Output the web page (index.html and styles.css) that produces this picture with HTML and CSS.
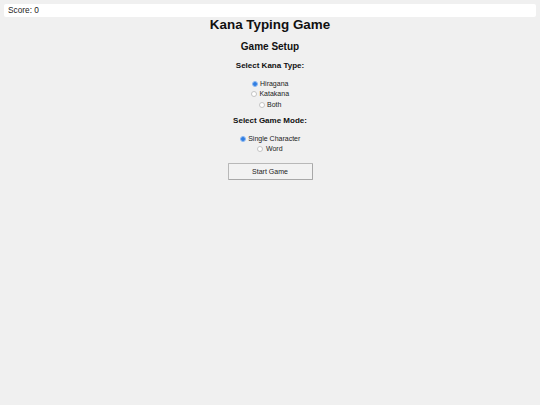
FILE: index.html
```html
<!DOCTYPE html>
<html lang="en">
<head>
<meta charset="utf-8">
<title>Kana Typing Game</title>
<link rel="stylesheet" href="styles.css">
</head>
<body>
<div class="score">Score: 0</div>
<h1 class="title">Kana Typing Game</h1>
<div class="setup">
  <h2 class="setup-title">Game Setup</h2>
  <h3 class="group-title">Select Kana Type:</h3>
  <div class="options">
    <label class="option"><input type="radio" name="kana" checked> Hiragana</label>
    <label class="option"><input type="radio" name="kana"> Katakana</label>
    <label class="option"><input type="radio" name="kana"> Both</label>
  </div>
  <h3 class="group-title">Select Game Mode:</h3>
  <div class="options">
    <label class="option"><input type="radio" name="mode" checked> Single Character</label>
    <label class="option"><input type="radio" name="mode"> Word</label>
  </div>
  <button class="start">Start Game</button>
</div>
</body>
</html>
```
FILE: styles.css
```css
html, body {
  background: #f0f0f0;
}
body {
  margin: 4px;
  font-family: "Liberation Sans", Arial, sans-serif;
  color: #111;
}
.score {
  background: #fff;
  height: 13px;
  line-height: 13px;
  padding: 0 4px;
  font-size: 8.3px;
  border-radius: 2px;
  color: #222;
}
.title {
  margin: 0;
  font-size: 13.4px;
  line-height: 15px;
  text-align: center;
}
.setup {
  text-align: center;
  display: flex;
  flex-direction: column;
  align-items: center;
}
.setup-title {
  margin: 9px 0 0;
  font-size: 10px;
  line-height: 12px;
}
.group-title {
  margin: 7.5px 0 0;
  font-size: 8px;
  line-height: 10px;
}
.group-title + .options {
  margin-top: 8px;
}
.options + .group-title {
  margin-top: 5.5px;
}
.options {
  display: flex;
  flex-direction: column;
  align-items: center;
}
.option {
  font-size: 7px;
  line-height: 10.5px;
  display: flex;
  align-items: center;
  gap: 1px;
  color: #222;
}
.option input {
  appearance: none;
  -webkit-appearance: none;
  width: 6px;
  height: 6px;
  margin: 0 1.5px 0 0;
  border-radius: 50%;
  border: 1px solid #c4c4c4;
  background: #fff;
}
.option input:checked {
  border-color: #7fb0f0;
  background: radial-gradient(circle, #2f7de1 0 55%, #6ea6ee 70%);
}
.start {
  margin-top: 8.5px;
  width: 85px;
  height: 17px;
  font-family: "Liberation Sans", Arial, sans-serif;
  font-size: 7px;
  background: #f2f2f2;
  border: 1px solid #b8b8b8;
  border-right-color: #a8a8a8;
  border-bottom-color: #a8a8a8;
  border-radius: 1px;
  color: #222;
}
```
